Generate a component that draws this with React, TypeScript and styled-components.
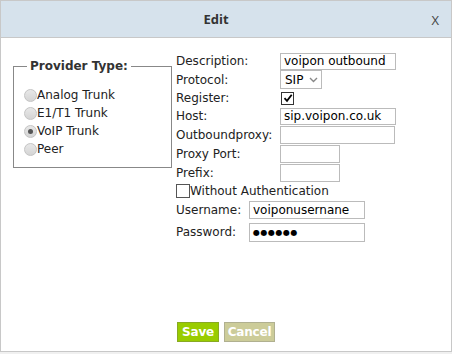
import React from "react";
import styled, { createGlobalStyle } from "styled-components";

const Global = createGlobalStyle`
  html, body { margin: 0; padding: 0; background: #f0f0f0; }
  body { font-family: "DejaVu Sans", Verdana, sans-serif; font-size: 12px; color: #222; }
`;

const Dialog = styled.div`
  width: 450px;
  height: 350px;
  border: 1px solid #c8c8c8;
  background: #fff;
  display: flex;
  flex-direction: column;
`;

const Header = styled.div`
  height: 36px;
  background: #d6e2ec;
  border-bottom: 1px solid #c8c8c8;
  display: flex;
  align-items: center;
  justify-content: center;
  padding-right: 20px;
  position: relative;
  font-family: "Open Sans", sans-serif;
  font-weight: 700;
  font-size: 13px;
  color: #333;
`;

const Close = styled.span`
  position: absolute;
  right: 12px;
  top: 10px;
  font-weight: 400;
  font-size: 13px;
  color: #444;
`;

const Body = styled.div`
  flex: 1;
  display: flex;
  flex-direction: column;
`;

const Content = styled.div`
  display: flex;
  align-items: flex-start;
  padding: 14px 0 0 12px;
`;

const Fieldset = styled.fieldset`
  margin: 7px 4px 0 0;
  padding: 13px 0 0 10px;
  width: 159px;
  height: 109px;
  border: 1px solid #888;
  box-sizing: border-box;
`;

const Legend = styled.legend`
  font-weight: 700;
  padding: 0 3px;
  margin-left: 3px;
  color: #333;
  font-size: 12px;
  line-height: 14px;
`;

const RadioRow = styled.label`
  display: flex;
  align-items: center;
  height: 18px;
  font-size: 12px;
`;

const Radio = styled.span<{ $on?: boolean }>`
  width: 13px;
  height: 13px;
  border-radius: 50%;
  background: linear-gradient(#e8e8e8, #d4d4d4);
  border: 1px solid #c4c4c4;
  box-sizing: border-box;
  display: flex;
  align-items: center;
  justify-content: center;
  &::after {
    content: "";
    width: 5px;
    height: 5px;
    border-radius: 50%;
    background: ${(p) => (p.$on ? "#555" : "transparent")};
  }
`;

const Form = styled.div`
  display: grid;
  grid-template-columns: 104px auto;
  grid-template-rows: 18px 19px 18px 18px 19px 19px 19px 17px auto;
  align-items: center;
`;

const Label = styled.div`
  line-height: 18px;
  white-space: nowrap;
`;

const Input = styled.div<{ $w: number; $h?: number }>`
  width: ${(p) => p.$w}px;
  height: ${(p) => p.$h ?? 17}px;
  border: 1px solid #bbb;
  box-sizing: border-box;
  padding: 0 3px;
  line-height: ${(p) => (p.$h ?? 17) - 2}px;
  font-size: 12px;
  color: #000;
  white-space: nowrap;
  overflow: hidden;
`;

const Dots = styled.span`
  font-size: 8px;
  letter-spacing: 0.5px;
  vertical-align: top;
`;

const Select = styled.div`
  width: 42px;
  height: 19px;
  border: 1px solid #bbb;
  box-sizing: border-box;
  display: flex;
  align-items: center;
  justify-content: space-between;
  padding: 0 3px 0 4px;
  color: #000;
`;

const Check = styled.span`
  width: 13px;
  height: 13px;
  border: 1px solid #333;
  box-sizing: border-box;
  display: flex;
  align-items: center;
  justify-content: center;
  margin-left: 1px;
`;

const CheckRow = styled.div`
  grid-column: 1 / 3;
  display: flex;
  align-items: center;
  height: 17px;
`;

const EmptyBox = styled.span`
  width: 14px;
  height: 14px;
  border: 1px solid #555;
  box-sizing: border-box;
`;

const Sub = styled.div`
  grid-column: 1 / 3;
  display: grid;
  grid-template-columns: 73px auto;
  grid-template-rows: 22px 22px;
  align-items: center;
`;

const Footer = styled.div`
  margin-top: auto;
  display: flex;
  gap: 5px;
  padding: 0 0 9px 176px;
`;

const Btn = styled.button<{ $bg: string; $bd: string; $w: number }>`
  width: ${(p) => p.$w}px;
  height: 20px;
  padding: 0;
  background: ${(p) => p.$bg};
  border: 1px solid ${(p) => p.$bd};
  color: #fff;
  font-family: "DejaVu Sans", Verdana, sans-serif;
  font-weight: 700;
  font-size: 12px;
  letter-spacing: -0.2px;
  line-height: 18px;
`;

const Tick = () => (
  <svg width="10" height="10" viewBox="0 0 10 10">
    <path d="M1.5 5.2 L4 7.8 L8.7 1.8" fill="none" stroke="#000" strokeWidth="1.8" />
  </svg>
);

const Chevron = () => (
  <svg width="9" height="6" viewBox="0 0 9 6">
    <path d="M1 1 L4.5 4.5 L8 1" fill="none" stroke="#888" strokeWidth="1.4" />
  </svg>
);

export default function App() {
  const radios = [
    ["Analog Trunk", false],
    ["E1/T1 Trunk", false],
    ["VoIP Trunk", true],
    ["Peer", false],
  ] as const;
  return (
    <>
      <Global />
      <Dialog>
        <Header>
          Edit
          <Close>X</Close>
        </Header>
        <Body>
          <Content>
            <Fieldset>
              <Legend>Provider Type:</Legend>
              {radios.map(([t, on]) => (
                <RadioRow key={t}>
                  <Radio $on={on} />
                  {t}
                </RadioRow>
              ))}
            </Fieldset>
            <Form>
              <Label>Description:</Label>
              <Input $w={116}>voipon outbound</Input>
              <Label>Protocol:</Label>
              <Select>
                SIP <Chevron />
              </Select>
              <Label>Register:</Label>
              <div>
                <Check>
                  <Tick />
                </Check>
              </div>
              <Label>Host:</Label>
              <Input $w={116}>sip.voipon.co.uk</Input>
              <Label>Outboundproxy:</Label>
              <Input $w={115} $h={18} />
              <Label>Proxy Port:</Label>
              <Input $w={60} $h={18} />
              <Label>Prefix:</Label>
              <Input $w={60} $h={18} />
              <CheckRow>
                <EmptyBox />
                Without Authentication
              </CheckRow>
              <Sub>
                <Label>Username:</Label>
                <Input $w={116} $h={18}>voiponusernane</Input>
                <Label>Password:</Label>
                <Input $w={116} $h={19}>
                  <Dots>●●●●●●</Dots>
                </Input>
              </Sub>
            </Form>
          </Content>
          <Footer>
            <Btn $bg="#99cc00" $bd="#88aa22" $w={42}>Save</Btn>
            <Btn $bg="#cccc99" $bd="#b0b090" $w={51}>Cancel</Btn>
          </Footer>
        </Body>
      </Dialog>
    </>
  );
}
